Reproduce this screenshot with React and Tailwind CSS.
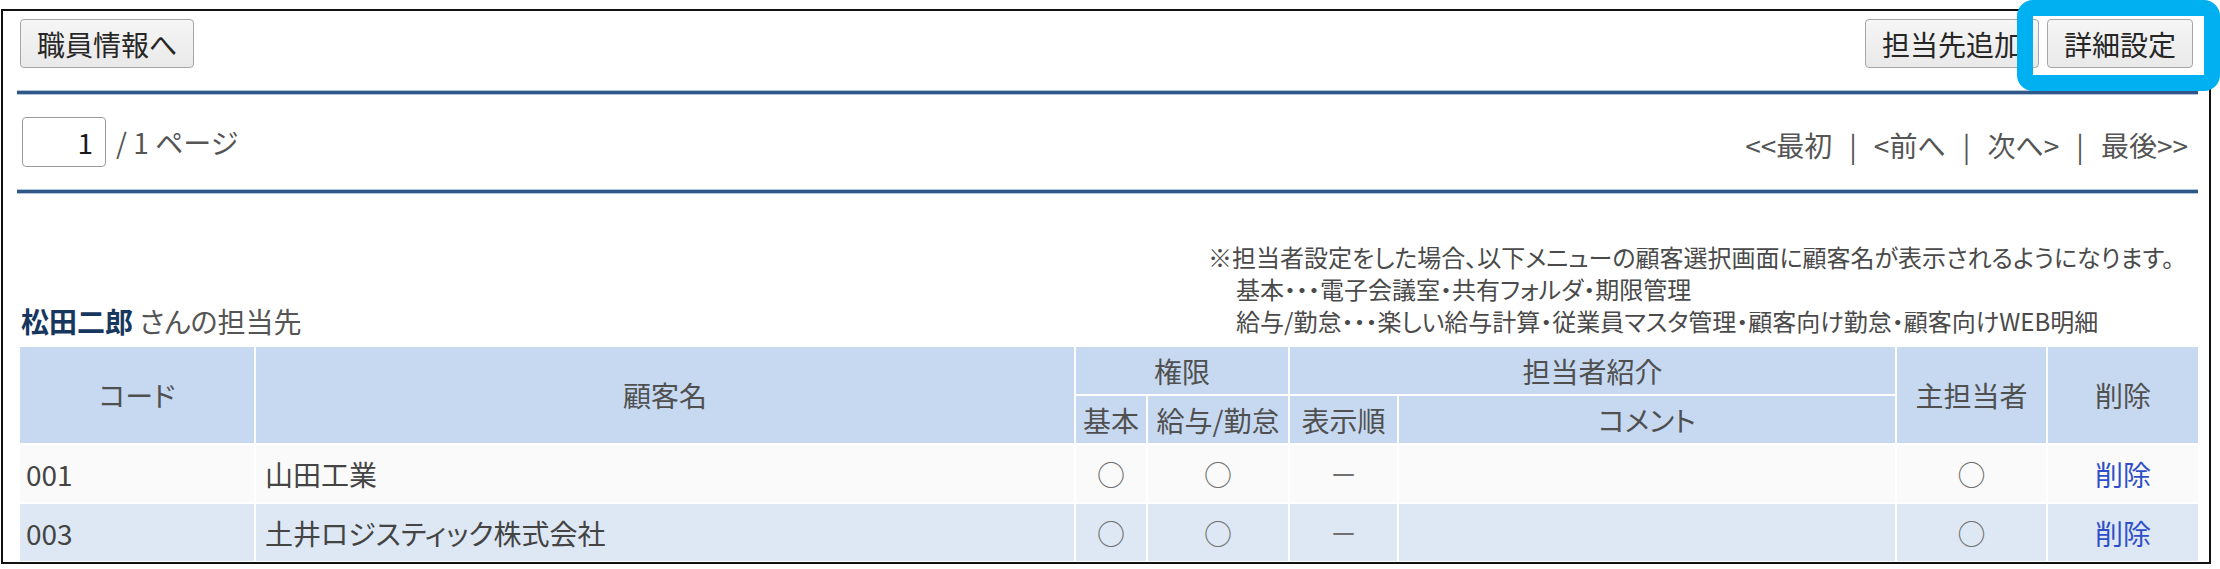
import React from 'react';

/**
 * 担当先一覧 (staff → assigned customers)
 * - toolbar buttons + blue highlight on 詳細設定
 * - pager between two navy rules
 * - note text + assignment table
 */

const font = "font-['Noto_Sans_CJK_JP','Noto_Sans',sans-serif] [font-feature-settings:'palt']";

const rows = [
  { code: '001', name: '山田工業', bg: 'bg-[#fafafa]' },
  { code: '003', name: '土井ロジスティック株式会社', bg: 'bg-[#dde8f4]' },
];

function Btn({ children, className = '' }) {
  return (
    <button
      className={`h-[49px] px-[16px] rounded-[4px] border border-[#a6a6a6] bg-gradient-to-b from-[#f6f6f6] to-[#e9e9e9] text-[28px] leading-none text-[#262626] ${className}`}
    >
      {children}
    </button>
  );
}

function Rule() {
  return <div className="h-[5px] bg-[#2f5888] border-y border-[#b3c5da]" />;
}

function Th({ children, className = '', ...rest }) {
  return (
    <th
      {...rest}
      className={`border-2 border-white bg-[#c6d9f0] font-normal text-[#505050] text-[28px] leading-none text-center ${className}`}
    >
      {children}
    </th>
  );
}

function Td({ children, className = 'text-[#444]' }) {
  return (
    <td className={`border-2 border-white text-[28px] leading-none ${className}`}>
      {children}
    </td>
  );
}

const pages = ['<<最初', '<前へ', '次へ>', '最後>>'];

export default function App() {
  return (
    <div className={`w-[2220px] h-[569px] bg-white relative overflow-hidden pt-[9px] ${font}`}>
      <div className="ml-[1px] w-[2210px] h-[555px] border-2 border-[#111] overflow-hidden pl-[14px] pr-[11px]">
        {/* toolbar */}
        <div className="flex items-center mt-[8px] pl-[3px] pr-[5px]">
          <Btn>職員情報へ</Btn>
          <div className="flex-1" />
          <Btn className="mr-[8px]">担当先追加</Btn>
          <Btn>詳細設定</Btn>
        </div>

        <div className="mt-[22px]">
          <Rule />
        </div>

        {/* pager */}
        <div className="flex items-center mt-[22px] pl-[5px] pr-[10px]">
          <div className="w-[84px] h-[50px] border border-[#9a9a9a] rounded-[4px] flex items-center justify-end pr-[12px] text-[28px] text-[#1a1a1a]">
            1
          </div>
          <span className="ml-[10px] text-[28px] text-[#555]">/ 1 ページ</span>
          <div className="flex-1" />
          <div className="flex items-center gap-[17px] text-[28px] text-[#555] mt-[6px]">
            {pages.map((p, i) => (
              <React.Fragment key={p}>
                {i > 0 && <span>|</span>}
                <span>{p}</span>
              </React.Fragment>
            ))}
          </div>
        </div>

        <div className="mt-[22px]">
          <Rule />
        </div>

        {/* title + note */}
        <div className="flex items-end mt-[47px] pl-[4px] pr-[24px]">
          <div className="text-[28px] leading-[32px]">
            <span className="font-bold text-[#17375e]">松田二郎</span>
            <span className="text-[#555]"> さんの担当先</span>
          </div>
          <div className="flex-1" />
          <div className="text-[24px] leading-[32px] text-[#4a4a4a]">
            <div>※担当者設定をした場合、以下メニューの顧客選択画面に顧客名が表示されるようになります。</div>
            <div className="pl-[28px]">基本・・・電子会議室・共有フォルダ・期限管理</div>
            <div className="pl-[28px]">給与/勤怠・・・楽しい給与計算・従業員マスタ管理・顧客向け勤怠・顧客向けWEB明細</div>
          </div>
        </div>

        {/* table */}
        <table className="mt-[8px] ml-[1px] w-[2180px] table-fixed border-collapse">
          <colgroup>
            <col className="w-[236px]" />
            <col className="w-[820px]" />
            <col className="w-[72px]" />
            <col className="w-[142px]" />
            <col className="w-[109px]" />
            <col className="w-[498px]" />
            <col className="w-[151px]" />
            <col className="w-[152px]" />
          </colgroup>
          <thead>
            <tr className="h-[49px]">
              <Th rowSpan={2}>コード</Th>
              <Th rowSpan={2}>顧客名</Th>
              <Th colSpan={2}>権限</Th>
              <Th colSpan={2}>担当者紹介</Th>
              <Th rowSpan={2}>主担当者</Th>
              <Th rowSpan={2}>削除</Th>
            </tr>
            <tr className="h-[49px]">
              <Th>基本</Th>
              <Th>給与/勤怠</Th>
              <Th>表示順</Th>
              <Th>コメント</Th>
            </tr>
          </thead>
          <tbody>
            {rows.map((r) => (
              <tr key={r.code} className={`h-[59px] ${r.bg}`}>
                <Td className="pl-[6px] text-[#444]">{r.code}</Td>
                <Td className="pl-[9px] text-[#444]">{r.name}</Td>
                <Td className="text-center text-[#707070]">○</Td>
                <Td className="text-center text-[#707070]">○</Td>
                <Td className="text-center text-[#707070]">－</Td>
                <Td />
                <Td className="text-center text-[#707070]">○</Td>
                <Td className="text-center text-[#2f4fc9]">削除</Td>
              </tr>
            ))}
          </tbody>
        </table>
      </div>

      {/* highlight annotation over 詳細設定 */}
      <div className="absolute left-[2017px] top-0 w-[203px] h-[91px] border-[16px] border-[#00b0f0] rounded-[16px]" />
    </div>
  );
}
